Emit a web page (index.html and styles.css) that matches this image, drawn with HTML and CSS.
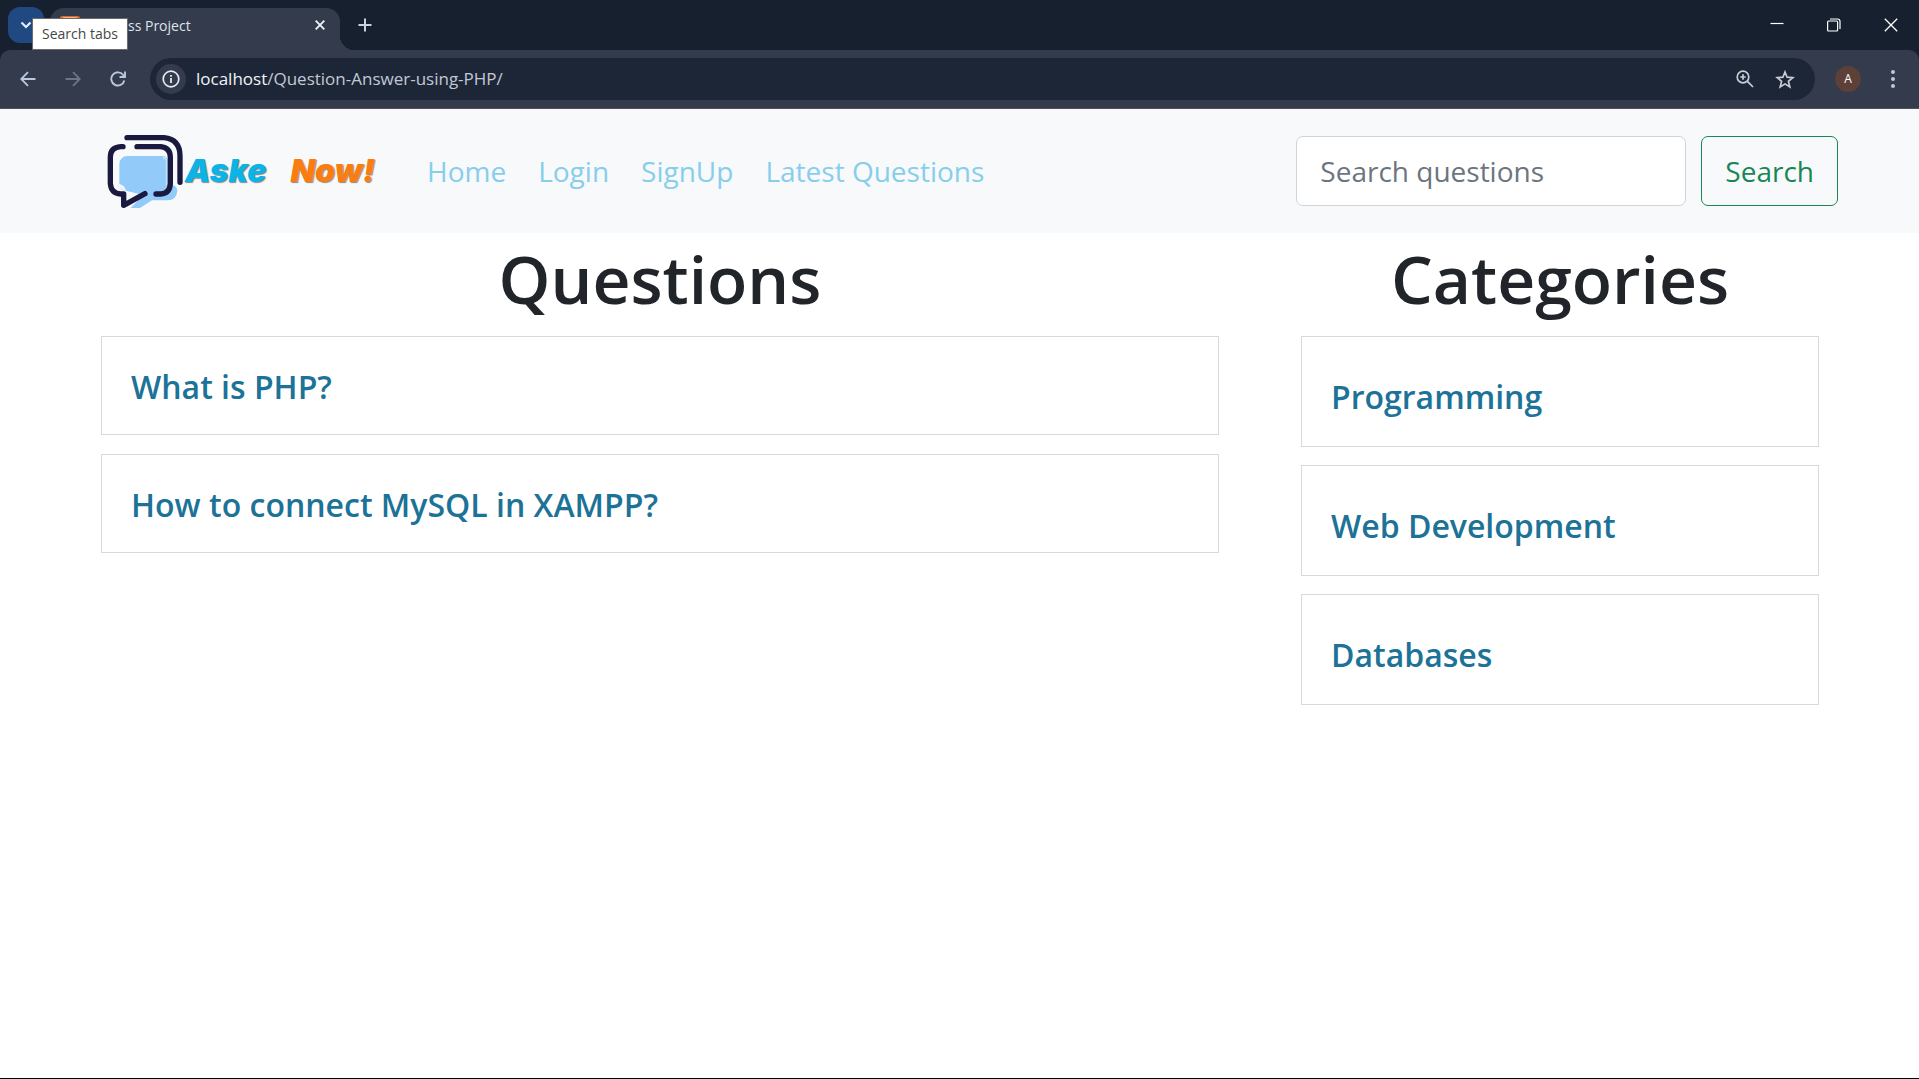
FILE: index.html
```html
<!DOCTYPE html>
<html lang="en">
<head>
<meta charset="utf-8">
<meta name="viewport" content="width=device-width, initial-scale=1">
<title>Questions</title>
<link rel="stylesheet" href="styles.css">
</head>
<body>
<header class="browser">
  <div class="tabstrip">
    <div class="tab-search">
      <button class="tab-search-btn" type="button" aria-label="Search tabs" aria-describedby="tip">
        <svg width="12" height="8" viewBox="0 0 12 8"><path d="M1.500 1.500 6 6l4.500-4.500" fill="none" stroke="#e6edf8" stroke-width="2.200"/></svg>
      </button>
      <span class="tooltip" id="tip" role="tooltip">Search tabs</span>
    </div>
    <div class="tab">
      <svg class="favicon" width="20" height="20" viewBox="0 0 20 20"><rect width="20" height="20" rx="2" fill="#d9692b"/><path d="M3 1h14v2H3z" fill="#f3b184"/></svg>
      <span class="tab-title">ss Project</span>
      <button class="icon-btn" type="button" aria-label="Close tab">
        <svg width="10" height="10" viewBox="0 0 10 10"><path d="M.7.7l8.600 8.600M9.300.7.7 9.300" stroke="#eef1f6" stroke-width="1.900"/></svg>
      </button>
    </div>
    <button class="icon-btn new-tab" type="button" aria-label="New tab">
      <svg width="14" height="14" viewBox="0 0 14 14"><path d="M7 .5v13M.5 7h13" stroke="#c8d2e4" stroke-width="2"/></svg>
    </button>
    <div class="window-controls">
      <button class="icon-btn" type="button" aria-label="Minimize"><svg width="14" height="14" viewBox="0 0 14 14"><path d="M.5 5.500h13" stroke="#fff" stroke-width="1.200"/></svg></button>
      <button class="icon-btn" type="button" aria-label="Restore"><svg width="14" height="14" viewBox="0 0 14 14"><rect x=".6" y="3" width="10" height="10" rx="1" fill="none" stroke="#fff" stroke-width="1.200"/><path d="M3 1h7.500Q13 1 13 3.500V11" fill="none" stroke="#fff" stroke-width="1.200"/></svg></button>
      <button class="icon-btn" type="button" aria-label="Close"><svg width="14" height="14" viewBox="0 0 14 14"><path d="M.8.800l12.400 12.400M13.200.8.8 13.200" stroke="#fff" stroke-width="1.300"/></svg></button>
    </div>
  </div>
  <div class="toolbar">
    <button class="icon-btn nav-icon" type="button" aria-label="Back"><svg width="16" height="16" viewBox="0 0 16 16"><path d="M15.500 8H1.500M8 1.200 1.200 8 8 14.800" fill="none" stroke="#b9c7df" stroke-width="1.800"/></svg></button>
    <button class="icon-btn nav-icon" type="button" aria-label="Forward" disabled><svg width="16" height="16" viewBox="0 0 16 16"><path d="M.5 8h14M8 1.200 14.800 8 8 14.800" fill="none" stroke="#6c7486" stroke-width="1.800"/></svg></button>
    <button class="icon-btn nav-icon" type="button" aria-label="Reload"><svg width="16" height="16" viewBox="0 0 16 16"><path d="M14.300 9.500A6.600 6.600 0 1 1 13.200 4L15 6M15 .5V6H9.500" fill="none" stroke="#b9c7df" stroke-width="1.900"/></svg></button>
    <div class="omnibox">
      <button class="site-info" type="button" aria-label="Site information"><svg width="18" height="18" viewBox="0 0 18 18"><circle cx="9" cy="9" r="7.800" fill="none" stroke="#e8eaf0" stroke-width="1.700"/><path d="M9 8v5M9 5v1.800" stroke="#e8eaf0" stroke-width="1.800"/></svg></button>
      <span class="url"><span class="host">localhost</span>/Question-Answer-using-PHP/</span>
      <button class="icon-btn" type="button" aria-label="Zoom"><svg width="18" height="18" viewBox="0 0 18 18"><circle cx="7" cy="7" r="5.800" fill="none" stroke="#c9cdd6" stroke-width="1.700"/><path d="M11.200 11.200 17 17M7 4.300v5.400M4.300 7h5.400" stroke="#c9cdd6" stroke-width="1.700"/></svg></button>
      <button class="icon-btn" type="button" aria-label="Bookmark"><svg width="20" height="19" viewBox="0 0 20 19"><path d="M10 2l2.100 5.200 5.700.4-4.400 3.700 1.400 5.600L10 13.900l-4.800 3 1.400-5.600L2.200 7.600l5.700-.4z" fill="none" stroke="#c9cdd6" stroke-width="1.700"/></svg></button>
    </div>
    <button class="avatar" type="button" aria-label="Profile">A</button>
    <button class="icon-btn menu" type="button" aria-label="Menu"><svg width="4" height="18" viewBox="0 0 4 18"><g fill="#b9c7df"><circle cx="2" cy="2" r="2"/><circle cx="2" cy="9" r="2"/><circle cx="2" cy="16" r="2"/></g></svg></button>
  </div>
</header>
<nav class="navbar">
  <a class="brand" href="#">
    <svg class="brand-mark" width="76" height="75" viewBox="51 42 228 225">
      <path d="M112 108H218Q234 110 234 126V192Q262 194 262 212 260 240 232 241H186L150 264H122L160 225 108 212Q104 196 88 192V132Q90 109 112 108Z" fill="#92cafa"/>
      <path d="M218 112Q230 114 230 126V196" fill="none" stroke="#c3e2fb" stroke-width="5"/>
      <path d="M90 204Q106 208 108 228" fill="none" stroke="#dceefb" stroke-width="6"/>
      <g fill="none" stroke="#1a1a40" stroke-width="16" stroke-linecap="round" stroke-linejoin="round">
        <path d="M111 53H222Q270 58 270 108V187"/>
        <path d="M99 80H92Q61 82 61 112V190Q63 220 92 222H101V256L165 221"/>
        <path d="M141 80H212Q241 83 241 112V190Q240 220 212 222H198"/>
      </g>
    </svg>
    <span class="brand-ask">Aske</span>
    <span class="brand-now">Now!</span>
  </a>
  <ul class="links">
    <li><a href="#">Home</a></li>
    <li><a href="#">Login</a></li>
    <li><a href="#">SignUp</a></li>
    <li><a href="#">Latest Questions</a></li>
  </ul>
  <form class="search" role="search">
    <input class="search-input" type="search" placeholder="Search questions" aria-label="Search questions">
    <button class="search-btn" type="submit">Search</button>
  </form>
</nav>
<main class="content">
  <section>
    <h1 class="heading">Questions</h1>
    <div class="list questions">
      <h4 class="card"><a href="#">What is PHP?</a></h4>
      <h4 class="card"><a href="#">How to connect MySQL in XAMPP?</a></h4>
    </div>
  </section>
  <section>
    <h1 class="heading">Categories</h1>
    <div class="list categories">
      <h4 class="card"><a href="#">Programming</a></h4>
      <h4 class="card"><a href="#">Web Development</a></h4>
      <h4 class="card"><a href="#">Databases</a></h4>
    </div>
  </section>
</main>
</body>
</html>
```
FILE: styles.css
```css
* { box-sizing: border-box; }

body {
  margin: 0;
  min-height: 100vh;
  border-bottom: 1px solid #000;
  background: #fff;
  color: #212529;
  font-family: "Open Sans", "Noto Sans", sans-serif;
}

button { font: inherit; cursor: pointer; }
a { text-decoration: none; }
svg { display: block; flex: none; }

/* Browser frame */
.browser { background: #17202f; }

.tabstrip {
  display: flex;
  align-items: flex-end;
  height: 50px;
  padding-left: 8px;
}

.tab-search { position: relative; align-self: center; }

.tab-search-btn {
  display: grid;
  place-items: center;
  width: 36px;
  height: 36px;
  padding: 0;
  border: 0;
  border-radius: 12px;
  background: #1f4980;
}

.tooltip {
  position: absolute;
  left: 24px;
  top: 11px;
  z-index: 2;
  padding: 5px 9px;
  border: 1px solid #6b6b6b;
  background: #fff;
  color: #474747;
  font-size: 14px;
  line-height: 20px;
  white-space: nowrap;
}

.tab {
  position: relative;
  display: flex;
  align-items: center;
  width: 290px;
  height: 42px;
  margin-left: 6px;
  padding: 0 15px 8px 10px;
  border-radius: 14px 14px 0 0;
  background: #343b4c;
}

.tab::after {
  content: "";
  position: absolute;
  left: 100%;
  bottom: 0;
  width: 14px;
  height: 14px;
  background: radial-gradient(circle at 100% 0, transparent 14px, #343b4c 14px);
}

.favicon { margin-top: 2px; }
.tab-title { flex: 1; padding: 2px 0 0 48px; color: #dfe3ec; font-size: 14px; line-height: 20px; }

.icon-btn {
  display: grid;
  place-items: center;
  padding: 0;
  border: 0;
  background: none;
}

.new-tab { width: 50px; height: 50px; }

.window-controls { display: flex; margin-left: auto; }
.window-controls .icon-btn { width: 57px; height: 50px; }

.toolbar {
  display: flex;
  align-items: center;
  height: 59px;
  padding: 0 8px 0 5px;
  border-bottom: 1px solid #504f56;
  border-radius: 10px 10px 0 0;
  background: #343b4c;
}

.nav-icon { width: 45px; height: 40px; }

.omnibox {
  display: flex;
  flex: 1;
  align-items: center;
  gap: 12px;
  height: 42px;
  margin-left: 10px;
  padding: 0 16px 0 6px;
  border-radius: 21px;
  background: #1d2637;
}

.site-info {
  display: grid;
  place-items: center;
  width: 30px;
  height: 30px;
  padding: 0;
  border: 0;
  border-radius: 50%;
  background: #343b4c;
}

.url { flex: 1; margin-left: -2px; color: #c3c8d4; font-size: 17px; line-height: 24px; }
.host { color: #f1f3f8; }
.omnibox .icon-btn { width: 28px; height: 28px; }

.avatar {
  width: 26px;
  height: 26px;
  margin-left: 20px;
  padding: 0;
  border: 0;
  border-radius: 50%;
  background: #5d4037;
  color: #fff;
  font-size: 12px;
  line-height: 26px;
}

.menu { width: 36px; height: 40px; margin-left: 14px; }

/* Site navigation */
.navbar {
  display: flex;
  align-items: center;
  min-height: 124px;
  padding: 8px 81px 8px 107px;
  background: #f8f9fb;
}

.brand {
  display: flex;
  align-items: center;
  font-family: Inter, sans-serif;
  font-size: 32px;
  font-style: italic;
  font-weight: 900;
  line-height: 40px;
  text-shadow: 1px 1px 1px #8a8a8a;
}

.brand-ask { margin-left: 2px; color: #0bb3e6; }
.brand-now { margin-left: 24px; color: #fa7d12; }

.links {
  display: flex;
  gap: 32px;
  margin: 0 0 0 52px;
  padding: 0;
  list-style: none;
  font-size: 28px;
  line-height: 44px;
}

.links a { color: #87ceeb; }

.search { display: flex; gap: 15px; margin-left: auto; }

.search-input,
.search-btn {
  height: 70px;
  border-radius: 7px;
  font-family: inherit;
  font-size: 28px;
}

.search-input {
  width: 390px;
  padding: 0 23px;
  border: 1px solid #ced4da;
  background: #fff;
  color: #212529;
}

.search-input::placeholder { color: #6c757d; opacity: 1; }

.search-btn {
  padding: 0 23px;
  border: 1px solid #198754;
  background: none;
  color: #198754;
}

/* Page content */
.content {
  display: grid;
  grid-template-columns: 1118fr 518fr;
  gap: 82px;
  padding: 0 100px 0 101px;
}

.heading {
  margin: 0;
  padding: 3px 0 16px;
  font-size: 66px;
  font-weight: 600;
  line-height: 84px;
  text-align: center;
}

.list { display: grid; gap: 19px; }

.card {
  margin: 0;
  padding: 30px 29px 27px;
  border: 1px solid #d9d9d9;
  font-size: 32px;
  font-weight: 600;
  line-height: 40px;
}

.card a { color: #1c7297; }
.categories { gap: 18px; }
.categories .card { padding: 40px 29px 29px; }
```
